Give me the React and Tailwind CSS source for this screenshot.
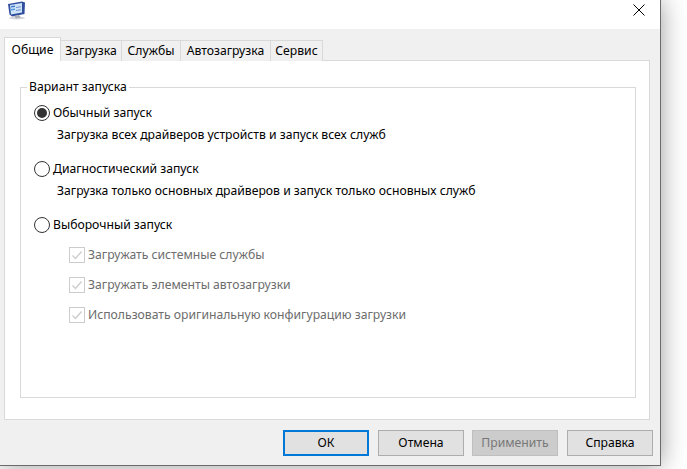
import React from 'react';

const tabs = ['Загрузка', 'Службы', 'Автозагрузка', 'Сервис'];
const tabWidths = ['w-[62px]', 'w-[60px]', 'w-[91px]', 'w-[53px]'];

const MonitorIcon = () => (
  <svg width="20" height="20" viewBox="0 0 20 20" aria-hidden="true">
    <ellipse cx="11" cy="17" rx="8" ry="1.5" fill="#d5d7db" />
    <path d="M2 3 L16 0.5 L19 1.5 L18.5 13 L6 15.5 L3.5 13.5 Z" fill="#2f4f9e" />
    <path d="M4 4 L16 2 L16 11.5 L5 13.5 Z" fill="#cfe3f8" />
    <path d="M5 5 L9 4.4 L9 6 L5 6.6 Z" fill="#3f7bd2" />
    <path d="M5 8 L9 7.4 L9 9 L5 9.6 Z" fill="#4f9be2" />
    <path d="M10 6 L15 5.2 L15 6.2 L10 7 Z M10 9 L15 8.2 L15 9.2 L10 10 Z" fill="#6f92c8" />
    <path d="M8 15 L13 14 L15 16.5 L10 17.5 Z" fill="#a9adb4" />
  </svg>
);

const Radio = ({ checked, label }) => (
  <div className="flex h-5 items-center">
    <span className="flex h-4 w-4 items-center justify-center rounded-full border border-[#333333] bg-white">
      {checked && <span className="h-[10px] w-[10px] rounded-full bg-[#333333]" />}
    </span>
    <span className="ml-[3px] text-black">{label}</span>
  </div>
);

const Check = ({ label }) => (
  <div className="flex h-5 items-center pl-[35px]">
    <span className="flex h-4 w-4 items-center justify-center border border-[#cccccc] bg-white">
      <svg width="12" height="12" viewBox="0 0 12 12" fill="none" stroke="#cccccc" strokeWidth="1.3" aria-hidden="true">
        <path d="M1.5 6.5 L4.5 9.5 L10.5 2.5" />
      </svg>
    </span>
    <span className="ml-[3px] text-[#6d6d6d]">{label}</span>
  </div>
);

const Button = ({ children, primary, disabled, className = '' }) => (
  <button
    className={`h-[26px] w-[86px] text-center ${className} ${
      primary
        ? 'border-2 border-[#0078d7] bg-[#e1e1e1] text-black'
        : disabled
          ? 'border border-[#bfbfbf] bg-[#cccccc] text-[#787878]'
          : 'border border-[#adadad] bg-[#e1e1e1] text-black'
    }`}
  >
    {children}
  </button>
);

export default function App() {
  return (
    <div className="h-[469px] w-[687px] overflow-hidden bg-white font-['Noto_Sans','Open_Sans',sans-serif] text-[12.2px] leading-4">
      <div className="flex h-[466px] w-[661px] flex-col border-r border-b border-[#6b6b6b] bg-[#f0f0f0] shadow-[0_0_24px_rgba(0,0,0,0.4)]">
        <div className="flex h-[29px] items-start justify-between bg-white">
          <div className="ml-[6px] mt-[1px]">
            <MonitorIcon />
          </div>
          <svg className="mr-[15px] mt-[4px]" width="12" height="12" viewBox="0 0 12 12" stroke="#000" strokeWidth="1" aria-hidden="true">
            <path d="M0.5 0.5 L11.5 11.5 M11.5 0.5 L0.5 11.5" />
          </svg>
        </div>

        <div className="flex flex-1 flex-col px-[4px] pb-[9px] pt-[8px]">
          <div className="relative z-10 flex h-6 items-end">
            <div className="flex h-6 w-[57px] items-center justify-center border border-b-0 border-[#d9d9d9] bg-white text-black">
              Общие
            </div>
            {tabs.map((t, i) => (
              <div
                key={t}
                className={`-ml-px flex h-[21px] items-center justify-center border border-b-0 border-[#d9d9d9] bg-[#f0f0f0] text-black ${tabWidths[i]}`}
              >
                {t}
              </div>
            ))}
          </div>

          <div className="-mt-px h-[360px] w-[646px] border border-[#d9d9d9] bg-white px-[15px] pt-[18px]">
            <fieldset className="h-[319px] w-[616px] border border-[#d9d9d9] px-[13px]">
              <legend className="ml-[-7px] px-[2px] leading-4 text-black">Вариант запуска</legend>
              <div className="mt-[8px]">
                <Radio checked label="Обычный запуск" />
                <div className="mt-[2px] h-5 pl-[23px] leading-5 text-black">
                  Загрузка всех драйверов устройств и запуск всех служб
                </div>
                <div className="mt-[14px]">
                  <Radio label="Диагностический запуск" />
                </div>
                <div className="mt-[2px] h-5 pl-[23px] leading-5 text-black">
                  Загрузка только основных драйверов и запуск только основных служб
                </div>
                <div className="mt-[14px]">
                  <Radio label="Выборочный запуск" />
                </div>
                <div className="mt-[10px] flex flex-col gap-[10px]">
                  <Check label="Загружать системные службы" />
                  <Check label="Загружать элементы автозагрузки" />
                  <Check label="Использовать оригинальную конфигурацию загрузки" />
                </div>
              </div>
            </fieldset>
          </div>

          <div className="mt-auto flex justify-end gap-[9px] pr-[3px]">
            <Button primary>ОК</Button>
            <Button>Отмена</Button>
            <Button disabled className="-ml-px">Применить</Button>
            <Button>Справка</Button>
          </div>
        </div>
      </div>
    </div>
  );
}
